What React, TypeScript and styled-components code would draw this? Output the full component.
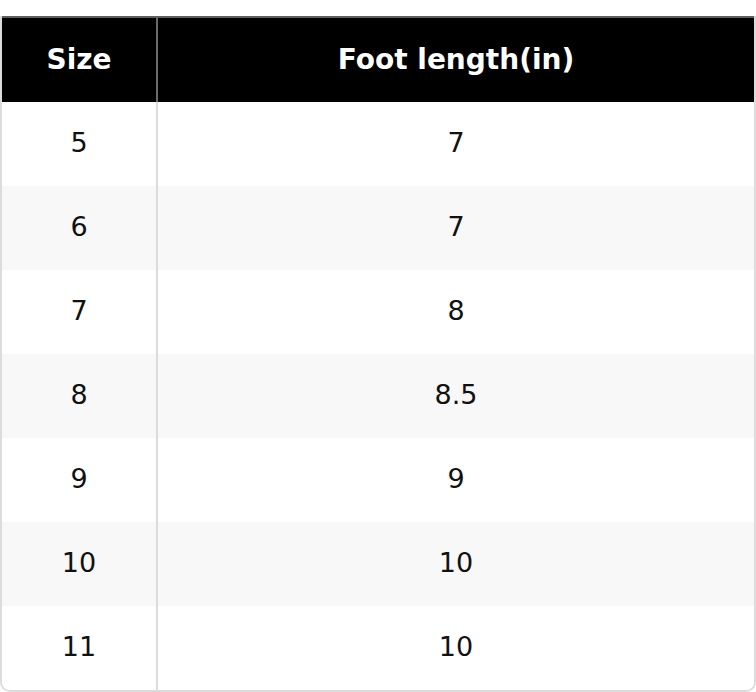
import React from "react"
import styled, {createGlobalStyle} from "styled-components"

const GlobalStyle = createGlobalStyle`
    body {
        margin: 0;
        background: #ffffff;
        font-family: "DejaVu Sans", "Liberation Sans", sans-serif;
    }
`

const rows = [
    {size: "5", foot: "7"},
    {size: "6", foot: "7"},
    {size: "7", foot: "8"},
    {size: "8", foot: "8.5"},
    {size: "9", foot: "9"},
    {size: "10", foot: "10"},
    {size: "11", foot: "10"},
]

export default function App()
{
    return (
        <Page>
            <GlobalStyle/>
            <Chart>
                <thead>
                    <tr>
                        <HeadCell $first>Size</HeadCell>
                        <HeadCell>Foot length(in)</HeadCell>
                    </tr>
                </thead>
                <tbody>
                    {rows.map((r, i) => (
                        <Row key={r.size} $striped={i % 2 === 1}>
                            <Cell $first>{r.size}</Cell>
                            <Cell>{r.foot}</Cell>
                        </Row>
                    ))}
                </tbody>
            </Chart>
        </Page>
    )
}

const Page = styled.div`
    padding-top: 16px;
    width: 756px;
`

const Chart = styled.table`
    width: 756px;
    border-collapse: separate;
    border-spacing: 0;
    border: 2px solid #dcdcdc;
    border-top: none;
    border-radius: 0 0 10px 10px;
    overflow: hidden;
    table-layout: fixed;
    font-size: 27px;
    color: #111;
`

const HeadCell = styled.th<{ $first?: boolean }>`
    background: #000;
    color: #fff;
    font-size: 28px;
    font-weight: bold;
    height: 82px;
    padding: 0 0 2px;
    text-align: center;
    border-top: 2px solid #5e5e5e;
    width: ${p => (p.$first ? "154px" : "auto")};
    border-right: ${p => (p.$first ? "2px solid #6a6a6a" : "none")};
`

const Row = styled.tr<{ $striped: boolean }>`
    background: ${p => (p.$striped ? "#f8f8f8" : "#ffffff")};
`

const Cell = styled.td<{ $first?: boolean }>`
    height: 81px;
    padding: 0 0 3px;
    text-align: center;
    border-right: ${p => (p.$first ? "2px solid #dcdcdc" : "none")};
`
